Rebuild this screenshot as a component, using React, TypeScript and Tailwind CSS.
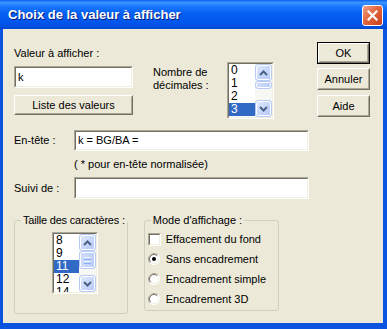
import React from "react";

function Sunken({ className = "", children }: { className?: string; children?: React.ReactNode }) {
  return (
    <div className={"border border-t-[#ACA899] border-l-[#ACA899] border-b-white border-r-white " + className}>
      <div className="h-full w-full border border-t-[#716F64] border-l-[#716F64] border-b-[#F1EFE2] border-r-[#F1EFE2] bg-white overflow-hidden">
        {children}
      </div>
    </div>
  );
}

function Btn({ label, def = false, className = "" }: { label: string; def?: boolean; className?: string }) {
  const inner = (
    <div className="h-full w-full border border-t-white border-l-white border-b-[#716F64] border-r-[#716F64]">
      <div className="h-full w-full border border-t-[#ECE9D8] border-l-[#ECE9D8] border-b-[#ACA899] border-r-[#ACA899] flex items-center justify-center">
        {label}
      </div>
    </div>
  );
  return def ? (
    <div className={"border border-black " + className}>{inner}</div>
  ) : (
    <div className={className}>{inner}</div>
  );
}

function Chevron({ up }: { up: boolean }) {
  return (
    <svg width="9" height="6" viewBox="0 0 9 6">
      <path d={up ? "M1 5 L4.5 1.5 L8 5" : "M1 1 L4.5 4.5 L8 1"} stroke="#4D6185" strokeWidth="2" fill="none" />
    </svg>
  );
}

function ScrollBtn({ up }: { up: boolean }) {
  return (
    <div className="w-[17px] h-[17px] rounded-[3px] border border-[#B7CAF5] bg-[linear-gradient(135deg,#E2EBFE_0%,#C4D5FC_60%,#B4C8F8_100%)] flex items-center justify-center shadow-[inset_0_0_0_1px_#FFFFFF]">
      <Chevron up={up} />
    </div>
  );
}

function Thumb({ h, grip }: { h: number; grip: boolean }) {
  return (
    <div
      className="w-[17px] rounded-[3px] border border-[#B7CAF5] bg-[linear-gradient(90deg,#CFDDFD_0%,#C3D4FC_60%,#B8CBF8_100%)] flex flex-col items-center justify-center gap-[1px] shadow-[inset_0_0_0_1px_#FFFFFF]"
      style={{ height: h }}
    >
      {grip && (
        <>
          <div className="w-[7px] h-[1px] bg-[#EEF4FE]" />
          <div className="w-[7px] h-[1px] bg-[#8CB0F8]" />
          <div className="w-[7px] h-[1px] bg-[#EEF4FE]" />
          <div className="w-[7px] h-[1px] bg-[#8CB0F8]" />
        </>
      )}
    </div>
  );
}

function ListBox({
  items,
  selected,
  w,
  h,
  colW,
  thumbH,
  grip,
}: {
  items: string[];
  selected: string;
  w: number;
  h: number;
  colW: number;
  thumbH: number;
  grip: boolean;
}) {
  return (
    <div style={{ width: w, height: h }}>
      <Sunken className="h-full w-full">
        <div className="flex h-full">
          <div className="flex flex-col" style={{ width: colW }}>
            {items.map((it) => (
              <div
                key={it}
                className={
                  "h-[13px] shrink-0 leading-[13px] text-[12px] pl-[2px] " +
                  (it === selected ? "bg-[#316AC5] text-white" : "text-black")
                }
              >
                {it}
              </div>
            ))}
          </div>
          <div className="flex-1 bg-[#F7F7F3] flex flex-col">
            <ScrollBtn up />
            <Thumb h={thumbH} grip={grip} />
            <div className="flex-1" />
            <ScrollBtn up={false} />
          </div>
        </div>
      </Sunken>
    </div>
  );
}

function Check() {
  return (
    <div className="w-[13px] h-[13px] border border-t-[#ACA899] border-l-[#ACA899] border-b-white border-r-white">
      <div className="w-full h-full border border-t-[#716F64] border-l-[#716F64] border-b-[#F1EFE2] border-r-[#F1EFE2] bg-white" />
    </div>
  );
}

function Radio({ on }: { on: boolean }) {
  return (
    <svg width="12" height="12" viewBox="0 0 12 12">
      <circle cx="6" cy="6" r="5.5" fill="#FFFFFF" />
      <path d="M2.1 9.9 A5.5 5.5 0 0 1 9.9 2.1" stroke="#ACA899" strokeWidth="1" fill="none" />
      <path d="M2.8 9.2 A4.5 4.5 0 0 1 9.2 2.8" stroke="#716F64" strokeWidth="1" fill="none" />
      <path d="M9.9 2.1 A5.5 5.5 0 0 1 2.1 9.9" stroke="#FFFFFF" strokeWidth="1" fill="none" />
      <path d="M9.2 2.8 A4.5 4.5 0 0 1 2.8 9.2" stroke="#F1EFE2" strokeWidth="1" fill="none" />
      {on && <circle cx="6" cy="6" r="2" fill="#000000" />}
    </svg>
  );
}

export default function App() {
  return (
    <div className="w-[387px] h-[329px] bg-[#0A54E0] flex flex-col font-['Liberation_Sans',Arial,sans-serif] text-[11px] text-black select-none">
      {/* Title bar */}
      <div className="h-[29px] shrink-0 flex items-center justify-between pl-[8px] pr-[4px] bg-[linear-gradient(to_bottom,#0A5FEA_0%,#3D95FF_9%,#1A78FF_22%,#0560F2_45%,#0055EA_80%,#0049D6_100%)]">
        <span className="text-white font-bold text-[13px] leading-[16px] [text-shadow:1px_1px_0_#0A1E80]">
          Choix de la valeur à afficher
        </span>
        <div className="w-[21px] h-[21px] mt-[1px] rounded-[3px] border border-white bg-[linear-gradient(135deg,#F0A48A_0%,#E2673F_45%,#C8401C_100%)] flex items-center justify-center">
          <svg width="11" height="11" viewBox="0 0 11 11">
            <path d="M1.5 1.5 L9.5 9.5 M9.5 1.5 L1.5 9.5" stroke="#FFFFFF" strokeWidth="2.2" strokeLinecap="square" />
          </svg>
        </div>
      </div>

      {/* Client area */}
      <div className="flex-1 ml-[3px] mr-[4px] mb-[6px] bg-[#ECE9D8] flex flex-col">
        {/* Top section */}
        <div className="h-[101px] shrink-0 flex items-start">
          <div className="ml-[11px] mt-[18px] w-[119px] flex flex-col">
            <div className="h-[13px] leading-[13px]">Valeur à afficher :</div>
            <Sunken className="mt-[6px] h-[22px]">
              <div className="pl-[2px] leading-[18px]">k</div>
            </Sunken>
            <Btn label="Liste des valeurs" className="mt-[7px] h-[20px]" />
          </div>
          <div className="ml-[20px] mt-[37px] w-[74px] leading-[13px]">
            <div>Nombre de</div>
            <div>décimales :</div>
          </div>
          <div className="mt-[33px]">
            <ListBox items={["0", "1", "2", "3", "4"]} selected="3" w={47} h={57} colW={26} thumbH={8} grip={false} />
          </div>
          <div className="ml-[43px] mt-[13px] w-[53px] flex flex-col">
            <Btn label="OK" def className="h-[22px]" />
            <Btn label="Annuler" className="mt-[4px] h-[22px]" />
            <Btn label="Aide" className="mt-[5px] h-[22px]" />
          </div>
        </div>

        {/* En-tête */}
        <div className="h-[21px] shrink-0 flex items-center">
          <div className="ml-[11px] w-[60px]">En-tête :</div>
          <Sunken className="w-[235px] h-[21px]">
            <div className="pl-[2px] leading-[17px]">k = BG/BA =</div>
          </Sunken>
        </div>
        <div className="mt-[7px] h-[13px] leading-[13px] ml-[71px] shrink-0">( * pour en-tête normalisée)</div>

        {/* Suivi de */}
        <div className="mt-[6px] h-[22px] shrink-0 flex items-center">
          <div className="ml-[11px] w-[60px]">Suivi de :</div>
          <Sunken className="w-[235px] h-[22px]" />
        </div>

        {/* Group boxes */}
        <div className="mt-[15px] flex items-start">
          <fieldset className="ml-[11px] w-[113px] h-[100px] border border-[#D0D0BF] rounded-[3px] shrink-0">
            <legend className="ml-[6px] px-[2px] leading-[13px] whitespace-nowrap tracking-[-0.2px] bg-[#ECE9D8]">Taille des caractères :</legend>
            <div className="ml-[37px] mt-[5px]">
              <ListBox items={["8", "9", "11", "12", "14"]} selected="11" w={46} h={62} colW={25} thumbH={18} grip />
            </div>
          </fieldset>
          <fieldset className="ml-[16px] w-[135px] h-[97px] border border-[#D0D0BF] rounded-[3px] shrink-0">
            <legend className="ml-[6px] px-[2px] leading-[13px] whitespace-nowrap">Mode d'affichage :</legend>
            <div className="mt-[2px] ml-[3px] flex flex-col">
              <div className="h-[20px] flex items-center">
                <Check />
                <span className="ml-[5px]">Effacement du fond</span>
              </div>
              <div className="h-[20px] flex items-center">
                <Radio on />
                <span className="ml-[6px]">Sans encadrement</span>
              </div>
              <div className="h-[20px] flex items-center">
                <Radio on={false} />
                <span className="ml-[6px]">Encadrement simple</span>
              </div>
              <div className="h-[20px] flex items-center">
                <Radio on={false} />
                <span className="ml-[6px]">Encadrement 3D</span>
              </div>
            </div>
          </fieldset>
        </div>
      </div>
    </div>
  );
}
